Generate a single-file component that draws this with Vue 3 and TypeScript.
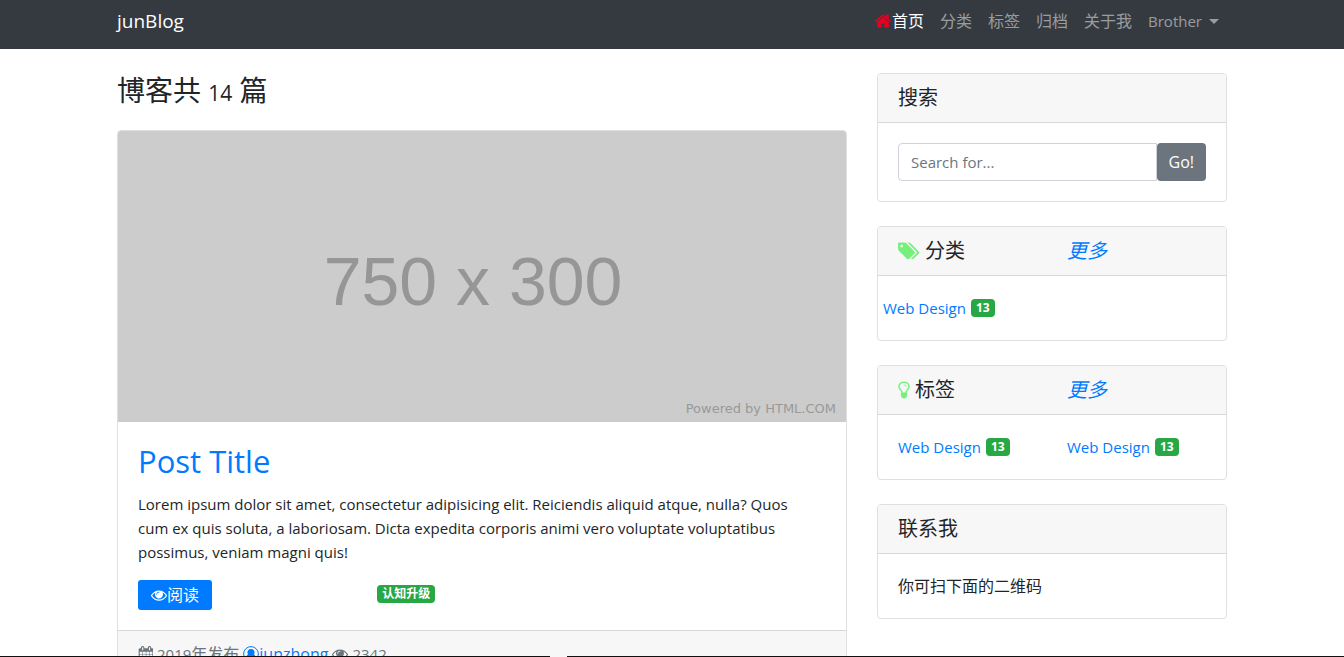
<script setup lang="ts">
import { ref } from 'vue'

const icons = {
  home: 'M1472 992v480q0 26-19 45t-45 19h-384v-384h-256v384h-384q-26 0-45-19t-19-45v-480q0-1 .5-3t.5-3l575-474 575 474q1 2 1 6zm223-69l-62 74q-8 9-21 11h-3q-13 0-21-7l-692-577-692 577q-12 8-24 7-13-2-21-11l-62-74q-8-10-7-23.5t11-21.5l719-599q32-26 76-26t76 26l244 204v-195q0-14 9-23t23-9h192q14 0 23 9t9 23v408l219 182q10 8 11 21.5t-7 23.5z',
  eye: 'M1664 960q-152-236-381-353 61 104 61 225 0 185-131.5 316.5t-316.5 131.5-316.5-131.5-131.5-316.5q0-121 61-225-229 117-381 353 133 205 333.5 326.5t434.5 121.5 434.5-121.5 333.5-326.5zm-720-384q0-20-14-34t-34-14q-125 0-214.5 89.5t-89.5 214.5q0 20 14 34t34 14 34-14 14-34q0-86 61-147t147-61q20 0 34-14t14-34zm848 384q0 34-20 69-140 230-376.5 368.5t-499.5 138.5-499.5-139-376.5-368q-20-35-20-69t20-69q140-229 376.5-368t499.5-139 499.5 139 376.5 368q20 35 20 69z',
  tags: 'M384 448q0-53-37.5-90.5t-90.5-37.5-90.5 37.5-37.5 90.5 37.5 90.5 90.5 37.5 90.5-37.5 37.5-90.5zm1067 576q0 53-37 90l-491 492q-39 37-91 37-53 0-90-37l-715-716q-38-37-64.5-101t-26.5-117v-416q0-52 38-90t90-38h416q53 0 117 26.5t102 64.5l715 714q37 39 37 91zm384 0q0 53-37 90l-491 492q-39 37-91 37-36 0-59-14t-53-45l470-470q37-37 37-90 0-52-37-91l-715-714q-38-38-102-64.5t-117-26.5h224q53 0 117 26.5t102 64.5l715 714q37 39 37 91z',
  bulb: 'M1120 576q0 13-9.5 22.5t-22.5 9.5-22.5-9.5-9.5-22.5q0-46-54-71t-106-25q-13 0-22.5-9.5t-9.5-22.5 9.5-22.5 22.5-9.5q50 0 99.5 16t87 54 37.5 90zm160 0q0-72-34.5-134t-90-101.5-123-62-136.5-22.5-136.5 22.5-123 62-90 101.5-34.5 134q0 101 68 180 10 11 30.5 33t30.5 33q128 153 141 298h228q13-145 141-298 10-11 30.5-33t30.5-33q68-79 68-180zm128 0q0 155-103 268-45 49-74.5 87t-59.5 95.5-34 107.5q47 28 47 82 0 37-25 64 25 27 25 64 0 52-45 81 13 23 13 47 0 46-31.5 71t-77.5 25q-20 44-60 70t-87 26-87-26-60-70q-46 0-77.5-25t-31.5-71q0-24 13-47-45-29-45-81 0-37 25-64-25-27-25-64 0-54 47-82-4-50-34-107.5t-59.5-95.5-74.5-87q-103-113-103-268 0-99 44.5-184.5t117-142 164-89 186.5-32.5 186.5 32.5 164 89 117 142 44.5 184.5z',
  calendar: 'M192 1664h288v-288h-288v288zm352 0h320v-288h-320v288zm-352-352h288v-320h-288v320zm352 0h320v-320h-320v320zm-352-384h288v-288h-288v288zm736 736h320v-288h-320v288zm-384-736h320v-288h-320v288zm768 736h288v-288h-288v288zm-384-352h320v-320h-320v320zm-352-864v-288q0-13-9.5-22.5t-22.5-9.5h-64q-13 0-22.5 9.5t-9.5 22.5v288q0 13 9.5 22.5t22.5 9.5h64q13 0 22.5-9.5t9.5-22.5zm736 864h288v-320h-288v320zm-384-384h320v-288h-320v288zm384 0h288v-288h-288v288zm32-480v-288q0-13-9.5-22.5t-22.5-9.5h-64q-13 0-22.5 9.5t-9.5 22.5v288q0 13 9.5 22.5t22.5 9.5h64q13 0 22.5-9.5t9.5-22.5zm384-64v1280q0 52-38 90t-90 38h-1408q-52 0-90-38t-38-90v-1280q0-52 38-90t90-38h128v-96q0-66 47-113t113-47h64q66 0 113 47t47 113v96h384v-96q0-66 47-113t113-47h64q66 0 113 47t47 113v96h128q52 0 90 38t38 90z'
}

const navLinks: string[] = ['分类', '标签', '归档', '关于我']
const query = ref('')
</script>

<template>
  <div class="page">
    <nav class="navbar">
      <div class="container nav-inner">
        <a class="brand" href="#">junBlog</a>
        <ul class="nav">
          <li>
            <a class="active" href="#"><svg class="home" viewBox="0 0 1792 1792" aria-hidden="true"><path :d="icons.home" /></svg>首页</a>
          </li>
          <li v-for="link in navLinks" :key="link"><a href="#">{{ link }}</a></li>
          <li><a class="latin dropdown" href="#">Brother</a></li>
        </ul>
      </div>
    </nav>

    <div class="container columns">
      <main class="posts">
        <h1>博客共 <small>14</small> 篇</h1>
        <article class="card">
          <svg class="cover" viewBox="0 0 728 291" role="img" aria-label="750 x 300">
            <rect width="728" height="291" fill="#ccc" />
            <text class="cover-size" x="355" y="174" text-anchor="middle">750 x 300</text>
            <text class="cover-credit" x="718" y="282" text-anchor="end">Powered by HTML.COM</text>
          </svg>
          <div class="card-body">
            <h2><a href="#">Post Title</a></h2>
            <p class="excerpt">Lorem ipsum dolor sit amet, consectetur adipisicing elit. Reiciendis aliquid atque, nulla? Quos cum ex quis soluta, a laboriosam. Dicta expedita corporis animi vero voluptate voluptatibus possimus, veniam magni quis!</p>
            <div class="row thirds">
              <div>
                <a class="read" href="#"><svg class="icon" viewBox="0 0 1792 1792" aria-hidden="true"><path :d="icons.eye" /></svg>阅读</a>
              </div>
              <div><span class="badge">认知升级</span></div>
            </div>
          </div>
          <footer class="card-footer">
            <svg class="icon calendar" viewBox="0 0 1664 1792" aria-hidden="true"><path :d="icons.calendar" /></svg>
            <span><span class="latin">2019</span>年发布</span>
            <a href="#"><svg class="icon" viewBox="0 0 16 16" aria-hidden="true"><circle cx="8" cy="8" r="7.4" fill="none" stroke="currentColor" /><circle cx="8" cy="6.4" r="3.5" /><path d="M3 12.3q.6-3.6 2.4-3.7 2.6 2 5.2 0 1.8.1 2.4 3.7Q8 16.6 3 12.3z" /></svg>junzhong</a>
            <svg class="icon" viewBox="0 0 1792 1792" aria-hidden="true"><path :d="icons.eye" /></svg>
            <span class="latin">2342</span>
          </footer>
        </article>
      </main>

      <aside class="sidebar">
        <section class="card">
          <h5 class="card-header">搜索</h5>
          <form class="card-body search" @submit.prevent>
            <input v-model="query" type="text" placeholder="Search for..." aria-label="Search for..." />
            <button type="submit">Go!</button>
          </form>
        </section>

        <section class="card">
          <div class="card-header">
            <div class="row halves">
              <h5><svg class="tags" viewBox="0 0 1835 1792" aria-hidden="true"><path :d="icons.tags" /></svg>分类</h5>
              <a class="more" href="#">更多</a>
            </div>
          </div>
          <div class="card-body">
            <div class="row tagged">
              <a class="latin" href="#">Web Design</a><span class="badge">13</span>
            </div>
          </div>
        </section>

        <section class="card">
          <div class="card-header">
            <div class="row halves">
              <h5><svg class="bulb" viewBox="384 0 1024 1792" aria-hidden="true"><path :d="icons.bulb" /></svg>标签</h5>
              <a class="more" href="#">更多</a>
            </div>
          </div>
          <div class="card-body">
            <div class="row halves">
              <div class="tagged"><a class="latin" href="#">Web Design</a><span class="badge">13</span></div>
              <div class="tagged"><a class="latin" href="#">Web Design</a><span class="badge">13</span></div>
            </div>
          </div>
        </section>

        <section class="card">
          <h5 class="card-header">联系我</h5>
          <div class="card-body">你可扫下面的二维码</div>
        </section>
      </aside>
    </div>

    <div class="bottom-edge" aria-hidden="true"><span></span><span></span></div>
  </div>
</template>

<style>
body {
  margin: 0;
}
</style>

<style scoped>
.page {
  height: 100vh;
  overflow-y: auto;
  scrollbar-width: none;
  background: #fff;
  color: #212529;
  font-family: "Open Sans", "Noto Sans CJK SC", sans-serif;
  font-size: 16px;
  line-height: 24px;
}
.page *,
.page *::after {
  box-sizing: border-box;
}
a {
  color: #007bff;
  text-decoration: none;
}
h1,
h2,
h5 {
  margin: 0;
  font-weight: 400;
}
svg {
  fill: currentColor;
}
.latin {
  font-size: 15px;
}
.container {
  max-width: 1140px;
  margin: 0 auto;
  padding: 0 15px;
}
.navbar {
  background: #343a40;
}
.nav-inner {
  display: flex;
  align-items: center;
  justify-content: space-between;
  padding-bottom: 7px;
}
.brand {
  color: #fff;
  font-size: 19px;
  line-height: 30px;
}
.nav {
  display: flex;
  margin: 0;
  padding: 0;
  list-style: none;
}
.nav a {
  display: flex;
  align-items: center;
  padding: 9px 8px;
  color: rgba(255, 255, 255, 0.5);
}
.nav a.active {
  color: #fff;
}
.dropdown::after {
  content: "";
  margin-left: 7px;
  border: 5px solid transparent;
  border-top-color: currentColor;
  border-bottom: 0;
}
.home {
  width: 18px;
  height: 18px;
  color: #e60021;
}
.columns {
  display: grid;
  grid-template-columns: minmax(0, 730fr) minmax(0, 350fr);
  gap: 30px;
  padding-top: 24px;
}
h1 {
  margin-bottom: 22px;
  font-size: 28px;
  line-height: 35px;
}
h1 small {
  font-size: 21px;
  line-height: 21px;
}
.card {
  overflow: hidden;
  background: #fff;
  border: 1px solid #dfdfdf;
  border-radius: 4px;
}
.cover {
  display: block;
  width: 100%;
}
.cover-size {
  fill: #969696;
  font-family: "Liberation Sans Narrow", "Liberation Sans", sans-serif;
  font-size: 68px;
}
.cover-credit {
  fill: #999;
  font-family: "DejaVu Sans", sans-serif;
  font-size: 13px;
}
.card-body {
  padding: 20px;
}
h2 {
  margin-bottom: 12px;
  font-size: 31px;
  font-weight: 500;
  line-height: 38px;
}
.excerpt {
  margin: 0 0 16px;
  padding-right: 20px;
  font-size: 15px;
}
.row {
  margin: 0 -15px;
}
.thirds,
.halves {
  display: grid;
}
.thirds {
  grid-template-columns: repeat(3, 1fr);
}
.halves {
  grid-template-columns: repeat(2, 1fr);
}
.thirds > *,
.halves > * {
  padding: 0 15px;
}
.tagged {
  display: flex;
  align-items: center;
  gap: 5px;
}
.read {
  display: inline-flex;
  align-items: center;
  padding: 3px 13px;
  border-radius: 3px;
  background: #007bff;
  color: #fff;
  vertical-align: top;
}
.icon {
  width: 16px;
  height: 16px;
}
.icon.calendar {
  width: 15px;
}
.badge {
  display: inline-block;
  padding: 3px 5px;
  border-radius: 4px;
  background: #28a745;
  color: #fff;
  font-size: 12px;
  font-weight: 700;
  line-height: 12px;
}
.card-footer {
  display: flex;
  gap: 4px;
  padding: 11px 20px;
  border-top: 1px solid #d8d8d8;
  background: #f7f7f7;
  color: #6c757d;
}
.card-footer a {
  display: flex;
}
.card-footer svg {
  margin-top: 4px;
}
.sidebar {
  display: flex;
  flex-direction: column;
  gap: 24px;
}
.card-header {
  padding: 12px 20px;
  border-bottom: 1px solid #d8d8d8;
  background: #f7f7f7;
  font-size: 20px;
  line-height: 24px;
}
h5 {
  display: flex;
  align-items: center;
  font-size: 20px;
}
.tags,
.bulb {
  height: 20px;
  color: #75f17b;
}
.tags {
  width: 22px;
  margin-right: 5px;
}
.bulb {
  width: 12px;
  margin-right: 5px;
}
.more {
  font-style: italic;
}
.search {
  display: flex;
}
.search input,
.search button {
  height: 38px;
  margin: 0;
  padding: 0 12px;
  border-radius: 4px;
  font: inherit;
}
.search input {
  flex: 1;
  min-width: 0;
  border: 1px solid #ced4da;
  border-radius: 4px 0 0 4px;
  background: #fff;
  color: #495057;
  font-size: 15px;
}
.search input::placeholder {
  color: #6c757d;
  opacity: 1;
}
.search button {
  border: 0;
  background: #6c757d;
  color: #fff;
}
.bottom-edge {
  position: fixed;
  right: 0;
  bottom: 0;
  left: 0;
  display: grid;
  grid-template-columns: 550fr 777fr;
  gap: 17px;
  height: 1px;
}
.bottom-edge span {
  background: #111;
}
</style>
